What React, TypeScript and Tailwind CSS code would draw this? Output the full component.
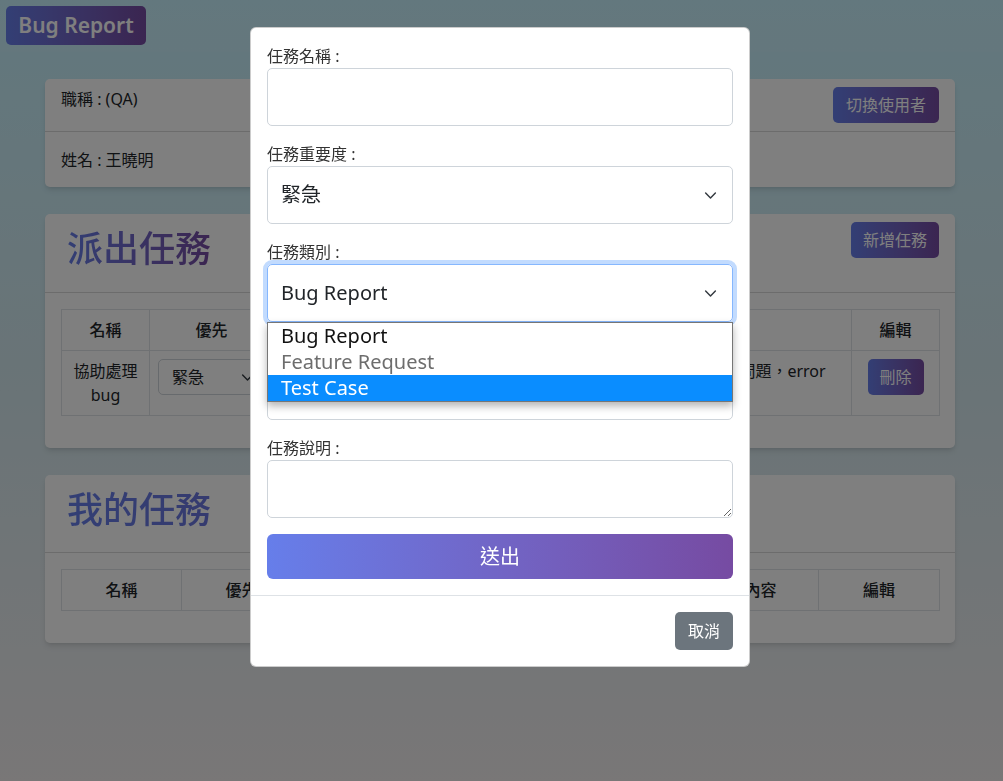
import React from "react";

const Chevron = ({ className = "" }: { className?: string }) => (
  <svg viewBox="0 0 16 16" width="13" height="13" className={className} fill="none" stroke="#343a40" strokeWidth="1.8" strokeLinecap="round" strokeLinejoin="round">
    <path d="m2 5 6 6 6-6" />
  </svg>
);

const GradBtn = ({ children, className = "" }: { children: React.ReactNode; className?: string }) => (
  <button className={`bg-gradient-to-r from-[#667eea] to-[#764ba2] text-white rounded-[5px] ${className}`}>{children}</button>
);

const th = "border border-[#dee2e6] px-2 py-2 text-center font-medium text-[16px] leading-[24px] text-[#212529]";
const td = "border border-[#dee2e6] px-2 py-2 text-center align-top text-[16px] leading-[24px] text-[#212529]";

export default function App() {
  return (
    <div className="relative min-h-[781px] bg-gradient-to-b from-[#c4f0fc] via-[#d4e8ee] to-[#f2eeef] font-['Noto_Sans','Noto_Sans_CJK_TC',sans-serif] text-[#212529]">
      {/* navbar */}
      <div className="h-[52px] bg-white/[0.06] pl-[6px] pt-[6px]">
        <GradBtn className="h-[39px] w-[140px] text-[21px] font-semibold leading-[39px]">Bug Report</GradBtn>
      </div>

      <div className="ml-[45px] mt-[27px] flex w-[910px] flex-col gap-[27px] pb-10">
        {/* user card */}
        <div className="rounded-[5px] bg-white shadow-md">
          <div className="flex items-start justify-between border-b border-black/15 px-4 py-2">
            <span className="text-[16px] leading-[24px]">職稱 : (QA)</span>
            <GradBtn className="h-[36px] px-[13px] text-[16px]">切換使用者</GradBtn>
          </div>
          <div className="px-4 pt-4 pb-[15px] text-[16px] leading-[24px]">姓名 : 王曉明</div>
        </div>

        {/* dispatched tasks */}
        <div className="rounded-[5px] bg-white shadow-md">
          <div className="flex items-start justify-between border-b border-black/15 px-4 pt-2 pb-2">
            <h1 className="mb-2 ml-[6px] bg-gradient-to-r from-[#667eea] to-[#764ba2] bg-clip-text text-[36px] leading-[54px] font-medium text-transparent">派出任務</h1>
            <GradBtn className="h-[36px] px-[12px] text-[16px]">新增任務</GradBtn>
          </div>
          <div className="p-4">
            <table className="mb-4 w-[878px] table-fixed border-collapse">
              <colgroup>
                <col className="w-[88px]" />
                <col className="w-[124px]" />
                <col className="w-[110px]" />
                <col className="w-[108px]" />
                <col className="w-[110px]" />
                <col className="w-[250px]" />
                <col className="w-[88px]" />
              </colgroup>
              <thead>
                <tr>
                  <th className={th}>名稱</th>
                  <th className={th}>優先</th>
                  <th className={th}>類別</th>
                  <th className={th}>狀態</th>
                  <th className={th}>負責人</th>
                  <th className={th}>內容</th>
                  <th className={th}>編輯</th>
                </tr>
              </thead>
              <tbody>
                <tr>
                  <td className={td}>協助處理<br />bug</td>
                  <td className={td}>
                    <div className="flex h-[36px] items-center justify-between rounded-[5px] border border-[#ced4da] bg-white pl-[13px] pr-[10px] text-left">
                      <span>緊急</span>
                      <Chevron />
                    </div>
                  </td>
                  <td className={td}>Bug Report</td>
                  <td className={td}>進行中</td>
                  <td className={td}>王曉明</td>
                  <td className={td}>測試登入時出現問題，error<br />500</td>
                  <td className={td}>
                    <GradBtn className="h-[36px] w-[56px] text-[16px]">刪除</GradBtn>
                  </td>
                </tr>
              </tbody>
            </table>
          </div>
        </div>

        {/* my tasks */}
        <div className="rounded-[5px] bg-white shadow-md">
          <div className="border-b border-black/15 px-4 pt-2 pb-2">
            <h1 className="mb-2 ml-[6px] bg-gradient-to-r from-[#667eea] to-[#764ba2] bg-clip-text text-[36px] leading-[53px] font-medium text-transparent">我的任務</h1>
          </div>
          <div className="p-4">
            <table className="mb-4 w-[878px] table-fixed border-collapse">
              <colgroup>
                <col className="w-[120px]" />
                <col className="w-[120px]" />
                <col className="w-[130px]" />
                <col className="w-[135px]" />
                <col className="w-[136px]" />
                <col className="w-[116px]" />
                <col className="w-[121px]" />
              </colgroup>
              <thead>
                <tr>
                  <th className={th}>名稱</th>
                  <th className={th}>優先</th>
                  <th className={th}>類別</th>
                  <th className={th}>狀態</th>
                  <th className={th}>發派者</th>
                  <th className={th}>內容</th>
                  <th className={th}>編輯</th>
                </tr>
              </thead>
            </table>
          </div>
        </div>
      </div>

      {/* backdrop */}
      <div className="fixed inset-0 bg-black/50" />

      {/* modal */}
      <div className="absolute left-[250px] top-[27px] w-[500px] rounded-[6px] border border-black/20 bg-white">
        <div className="p-4">
          <label className="block text-[16px] leading-[24px] text-[#333]">任務名稱 :</label>
          <input className="mb-4 block h-[58px] w-full rounded-[5px] border border-[#ced4da] px-[13px] text-[20px] outline-none" />

          <label className="block text-[16px] leading-[24px] text-[#333]">任務重要度 :</label>
          <div className="mb-4 flex h-[58px] w-full items-center justify-between rounded-[5px] border border-[#ced4da] pl-[13px] pr-[15px] text-[20px]">
            <span>緊急</span>
            <Chevron />
          </div>

          <label className="block text-[16px] leading-[24px] text-[#333]">任務類別 :</label>
          <div className="relative mb-4">
            <div className="flex h-[58px] w-full items-center justify-between rounded-[5px] border border-[#86b7fe] pl-[13px] pr-[15px] text-[20px] shadow-[0_0_0_4px_rgba(13,110,253,0.25)]">
              <span>Bug Report</span>
              <Chevron />
            </div>
            {/* native dropdown list */}
            <div className="absolute left-0 top-[58px] z-10 w-full border border-[#767676] bg-white text-[20px] leading-[26px] shadow-[0_4px_8px_rgba(0,0,0,0.3)]">
              <div className="pl-[13px] text-[#111]">Bug Report</div>
              <div className="pl-[13px] text-[#6d6d6d]">Feature Request</div>
              <div className="bg-[#0a8dff] pl-[13px] text-white">Test Case</div>
            </div>
          </div>

          <label className="invisible block text-[16px] leading-[24px] text-[#333]">任務內容 :</label>
          <input className="mb-4 block h-[58px] w-full rounded-[5px] border border-[#ced4da] px-[13px] text-[20px] outline-none" />

          <label className="block text-[16px] leading-[24px] text-[#333]">任務說明 :</label>
          <textarea className="mb-4 block h-[58px] w-full rounded-[5px] border border-[#ced4da] px-[13px] text-[20px] outline-none" />

          <button className="block h-[45px] w-full rounded-[6px] bg-gradient-to-r from-[#667eea] to-[#764ba2] text-[20px] text-white">送出</button>
        </div>
        <div className="flex justify-end border-t border-[#dee2e6] p-4">
          <button className="h-[38px] w-[58px] rounded-[5px] bg-[#6c757d] text-[16px] text-white">取消</button>
        </div>
      </div>
    </div>
  );
}
